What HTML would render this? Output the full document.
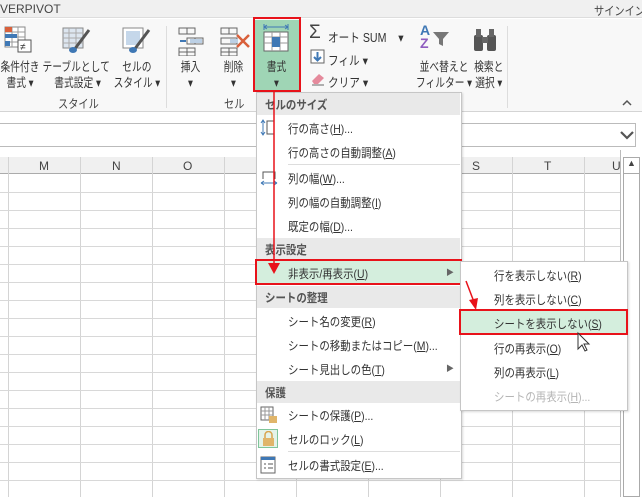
<!DOCTYPE html>
<html><head><meta charset="utf-8"><style>
*{margin:0;padding:0;box-sizing:border-box}
body{width:642px;height:497px;overflow:hidden;position:relative;background:#fff;font-family:"Liberation Sans","Noto Sans CJK JP",sans-serif;font-size:12px;color:#444}
.a{position:absolute}
.t{position:absolute;white-space:nowrap}
.hl{position:absolute;left:0;width:620px;height:1px;background:#d8d8d8}
.vl{position:absolute;top:157px;width:1px;height:340px;background:#d4d4d4}
.mi,.si,.mh span{transform:scaleX(.87);transform-origin:left center}
.mi{position:absolute;left:288px;white-space:nowrap;color:#333;font-size:12px}
.mh{position:absolute;left:257px;width:203px;height:22px;background:#e9e9e9;color:#555;padding:3px 0 0 8px;font-weight:bold;font-size:12px}
.mh span{display:inline-block}
.si{position:absolute;left:494px;white-space:nowrap;color:#333}
u{text-decoration:underline}
.cap{position:absolute;width:90px;font-size:12.5px;color:#333;text-align:center;line-height:16px;white-space:nowrap}
.cap span{display:inline-block;transform:scaleX(.78)}
.sm{display:inline-block;transform:scaleX(.85);transform-origin:left center}
</style></head><body>
<div class="a" style="left:0;top:0;width:642px;height:18px;background:#f0f0f0;border-bottom:1px solid #ddd"></div>
<div class="t" style="left:0;top:2px;font-size:12px;color:#444">VERPIVOT</div>
<div class="t" style="left:594px;top:2px;font-size:12px;color:#444"><span class="sm">サインイン</span></div>
<div class="a" style="left:0;top:19px;width:642px;height:93px;background:#f8f8f8;border-bottom:1px solid #d4d4d4"></div>
<div class="a" style="left:166px;top:26px;width:1px;height:82px;background:#ddd"></div>
<div class="a" style="left:507px;top:26px;width:1px;height:82px;background:#ddd"></div>
<svg class="a" style="left:4px;top:26px" width="30" height="30"><rect x="1" y="1" width="20" height="20" fill="#fff" stroke="#888"/><path d="M1 6h20M1 11h20M1 16h20M8 1v20M14 1v20" stroke="#999"/><rect x="1" y="1" width="7" height="5" fill="#d9603b"/><rect x="1" y="8" width="12" height="4" fill="#3f78b5"/><rect x="1" y="15" width="5" height="5" fill="#3f78b5"/><rect x="14" y="14" width="13" height="12" fill="#fff" stroke="#555"/><text x="16" y="24" font-size="10" fill="#333">≠</text></svg>
<div class="cap" style="left:-25px;top:59px"><span>条件付き<br>書式 ▾</span></div>
<svg class="a" style="left:62px;top:26px" width="30" height="30"><rect x="1" y="2" width="20" height="20" fill="#dde6f0" stroke="#888"/><path d="M1 7h20M1 12h20M1 17h20M7 2v20M14 2v20" stroke="#aaa"/><path d="M27 4L12 24" stroke="#555" stroke-width="3"/><ellipse cx="11" cy="24" rx="4" ry="3" fill="#3f78b5"/></svg>
<div class="cap" style="left:31px;top:59px"><span>テーブルとして<br>&nbsp;書式設定 ▾</span></div>
<svg class="a" style="left:122px;top:26px" width="30" height="30"><rect x="1" y="2" width="20" height="20" fill="#fff" stroke="#888"/><rect x="4" y="5" width="14" height="14" fill="#c5d7ea"/><path d="M27 4L12 24" stroke="#555" stroke-width="3"/><ellipse cx="11" cy="24" rx="4" ry="3" fill="#3f78b5"/></svg>
<div class="cap" style="left:92px;top:59px"><span>セルの<br>スタイル ▾</span></div>
<div class="t" style="left:58px;top:95px;color:#444"><span class="sm">スタイル</span></div>
<svg class="a" style="left:178px;top:26px" width="30" height="30"><path d="M1 2h16v6H1zM9 2v6M9 12h16v6H9zM17 12v6M1 22h16v8H1zM9 22v8M1 26h16" fill="none" stroke="#666"/><path d="M2 15h6" stroke="#3f78b5" stroke-width="2"/><rect x="12" y="13" width="12" height="4" fill="#bcd0e5"/></svg>
<div class="cap" style="left:146px;top:59px"><span>挿入<br>▾</span></div>
<svg class="a" style="left:220px;top:26px" width="32" height="30"><path d="M1 2h16v6H1zM9 2v6M1 12h16v6H1zM1 22h16v8H1zM9 22v8M1 26h16" fill="none" stroke="#666"/><rect x="10" y="13" width="8" height="4" fill="#bcd0e5"/><path d="M17 9l12 12M29 9L17 21" stroke="#d9603b" stroke-width="2.5"/></svg>
<div class="cap" style="left:189px;top:59px"><span>削除<br>▾</span></div>
<div class="t" style="left:224px;top:95px;color:#444"><span class="sm">セル</span></div>
<div class="a" style="left:255px;top:20px;width:44px;height:70px;background:#9fd5b5"></div>
<div class="a" style="left:253px;top:17px;width:48px;height:75px;border:2px solid #e8121a"></div>
<svg class="a" style="left:261px;top:23px" width="32" height="32"><path d="M3 4h24M3 4l3-2M3 4l3 2M27 4l-3-2M27 4l-3 2" stroke="#3f78b5" fill="none"/><path d="M3 1v6M27 1v6" stroke="#3f78b5"/><rect x="3" y="9" width="24" height="19" fill="#fff" stroke="#666"/><path d="M3 14h24M3 20h24M11 9v19M19 9v19" stroke="#999"/><rect x="11" y="14" width="8" height="10" fill="#3f78b5"/></svg>
<div class="cap" style="left:232px;top:59px"><span>書式<br>▾</span></div>
<div class="t" style="left:309px;top:22px;font-size:19px;color:#444">Σ</div>
<div class="t" style="left:328px;top:27px;font-size:12.5px;color:#333"><span class="sm">オート SUM &nbsp;&nbsp;&nbsp;▾</span></div>
<svg class="a" style="left:310px;top:49px" width="16" height="16"><rect x="1" y="1" width="13" height="13" fill="#fff" stroke="#666"/><path d="M7.5 3v8M4 8l3.5 3.5L11 8" stroke="#3f78b5" stroke-width="2" fill="none"/></svg>
<div class="t" style="left:328px;top:50px;font-size:12.5px;color:#333"><span class="sm">フィル ▾</span></div>
<svg class="a" style="left:310px;top:70px" width="16" height="16"><path d="M2 11l7-7 5 4-6 6H4z" fill="#e58a9c"/><path d="M2 15h12" stroke="#666"/></svg>
<div class="t" style="left:328px;top:72px;font-size:12.5px;color:#333"><span class="sm">クリア ▾</span></div>
<div class="t" style="left:420px;top:22px;font-size:14px;font-weight:bold;color:#3f78b5">A</div>
<div class="t" style="left:420px;top:35px;font-size:14px;font-weight:bold;color:#8e5cbf">Z</div>
<svg class="a" style="left:432px;top:30px" width="18" height="18"><path d="M1 2h16l-6 7v7l-4-2V9z" fill="#777"/></svg>
<div class="cap" style="left:399px;top:59px"><span>並べ替えと<br>フィルター ▾</span></div>
<svg class="a" style="left:472px;top:27px" width="26" height="26"><rect x="2" y="8" width="9" height="16" rx="2" fill="#555"/><rect x="15" y="8" width="9" height="16" rx="2" fill="#555"/><rect x="4" y="2" width="5" height="8" fill="#666"/><rect x="17" y="2" width="5" height="8" fill="#666"/><rect x="10" y="10" width="6" height="6" fill="#666"/></svg>
<div class="cap" style="left:444px;top:59px"><span>検索と<br>選択 ▾</span></div>
<svg class="a" style="left:622px;top:99px" width="10" height="8"><path d="M1 6l4-4 4 4" stroke="#555" stroke-width="1.5" fill="none"/></svg>
<div class="a" style="left:0;top:123px;width:636px;height:24px;border:1px solid #bbb;border-left:none;background:#fff"></div>
<svg class="a" style="left:620px;top:129px" width="14" height="12"><path d="M1 3l6 6 6-6" stroke="#555" stroke-width="2.2" fill="none"/></svg>
<div class="a" style="left:0;top:157px;width:620px;height:17px;background:#f0f0f0;border-bottom:1px solid #ababab"></div>
<div class="a" style="left:620px;top:150px;width:1px;height:347px;background:#bbb"></div>
<div class="a" style="left:623px;top:157px;width:17px;height:17px;border:1px solid #aaa;background:#fff"></div>
<div class="t" style="left:627px;top:158px;font-size:9px;color:#444">▲</div>
<div class="a" style="left:623px;top:174px;width:17px;height:323px;border:1px solid #aaa;border-top:none;background:#fff"></div>
<div class="vl" style="left:8px"></div><div class="vl" style="left:80px"></div><div class="vl" style="left:152px"></div><div class="vl" style="left:224px"></div><div class="vl" style="left:296px"></div><div class="vl" style="left:368px"></div><div class="vl" style="left:440px"></div><div class="vl" style="left:512px"></div><div class="vl" style="left:584px"></div>
<div class="t" style="left:39px;top:159px;color:#444">M</div>
<div class="t" style="left:112px;top:159px;color:#444">N</div>
<div class="t" style="left:183px;top:159px;color:#444">O</div>
<div class="t" style="left:472px;top:159px;color:#444">S</div>
<div class="t" style="left:544px;top:159px;color:#444">T</div>
<div class="t" style="left:612px;top:159px;color:#444">U</div>
<div class="hl" style="top:192px"></div><div class="hl" style="top:210px"></div><div class="hl" style="top:228px"></div><div class="hl" style="top:246px"></div><div class="hl" style="top:264px"></div><div class="hl" style="top:282px"></div><div class="hl" style="top:300px"></div><div class="hl" style="top:318px"></div><div class="hl" style="top:336px"></div><div class="hl" style="top:354px"></div><div class="hl" style="top:372px"></div><div class="hl" style="top:390px"></div><div class="hl" style="top:408px"></div><div class="hl" style="top:426px"></div><div class="hl" style="top:444px"></div><div class="hl" style="top:462px"></div><div class="hl" style="top:480px"></div>
<div class="a" style="left:256px;top:92px;width:206px;height:387px;background:#fff;border:1px solid #c6c6c6;box-shadow:1px 1px 2px rgba(0,0,0,.15)"></div>
<div class="mh" style="top:93px"><span>セルのサイズ</span></div>
<svg class="a" style="left:260px;top:119px" width="16" height="18"><path d="M3 1v15M1 4l2-3 2 3M1 13l2 3 2-3" stroke="#3f78b5" fill="none"/><rect x="7" y="2" width="7" height="13" fill="none" stroke="#555"/></svg>
<div class="mi" style="top:120px">行の高さ(<u>H</u>)...</div>
<div class="mi" style="top:144px">行の高さの自動調整(<u>A</u>)</div>
<div class="a" style="left:288px;top:164px;width:172px;height:1px;background:#ddd"></div>
<svg class="a" style="left:260px;top:170px" width="18" height="16"><path d="M3 9V2h12v7" fill="none" stroke="#555"/><path d="M1 13h16M1 13l3-2M1 13l3 2M17 13l-3-2M17 13l-3 2" stroke="#3f78b5" fill="none"/></svg>
<div class="mi" style="top:170px">列の幅(<u>W</u>)...</div>
<div class="mi" style="top:194px">列の幅の自動調整(<u>I</u>)</div>
<div class="mi" style="top:218px">既定の幅(<u>D</u>)...</div>
<div class="mh" style="top:238px"><span>表示設定</span></div>
<div class="a" style="left:257px;top:260px;width:203px;height:24px;background:#d4eedd"></div>
<div class="a" style="left:255px;top:259px;width:207px;height:26px;border:2px solid #e8121a"></div>
<div class="mi" style="top:265px">非表示/再表示(<u>U</u>)</div>
<div class="t" style="left:446px;top:267px;font-size:8px;color:#666">▶</div>
<div class="mh" style="top:286px"><span>シートの整理</span></div>
<div class="mi" style="top:313px">シート名の変更(<u>R</u>)</div>
<div class="mi" style="top:337px">シートの移動またはコピー(<u>M</u>)...</div>
<div class="mi" style="top:361px">シート見出しの色(<u>T</u>)</div>
<div class="t" style="left:446px;top:363px;font-size:8px;color:#666">▶</div>
<div class="mh" style="top:381px"><span>保護</span></div>
<svg class="a" style="left:260px;top:406px" width="18" height="18"><rect x="1" y="1" width="12" height="13" fill="#fff" stroke="#666"/><path d="M1 5h12M1 9h12M5 1v13M9 1v13" stroke="#999"/><rect x="9" y="10" width="8" height="7" fill="#e0b56a"/></svg>
<div class="mi" style="top:407px">シートの保護(<u>P</u>)...</div>
<div class="a" style="left:258px;top:429px;width:20px;height:19px;border:1px solid #7fc59a;background:#e4f3e9"></div>
<svg class="a" style="left:262px;top:431px" width="13" height="15"><path d="M3 7V4a3.5 3.5 0 017 0v3" stroke="#d9a54e" fill="none" stroke-width="1.5"/><rect x="1" y="7" width="11" height="8" fill="#e0b56a"/></svg>
<div class="mi" style="top:431px">セルのロック(<u>L</u>)</div>
<div class="a" style="left:288px;top:451px;width:172px;height:1px;background:#ddd"></div>
<svg class="a" style="left:260px;top:456px" width="16" height="18"><rect x="1" y="1" width="14" height="16" fill="#fff" stroke="#666"/><rect x="1" y="1" width="14" height="3" fill="#3f78b5"/><path d="M4 8h2M8 8h5M4 12h2M8 12h5" stroke="#555"/></svg>
<div class="mi" style="top:457px">セルの書式設定(<u>E</u>)...</div>
<div class="a" style="left:460px;top:261px;width:168px;height:150px;background:#fff;border:1px solid #c6c6c6;box-shadow:1px 1px 2px rgba(0,0,0,.15)"></div>
<div class="si" style="top:267px">行を表示しない(<u>R</u>)</div>
<div class="si" style="top:291px">列を表示しない(<u>C</u>)</div>
<div class="a" style="left:461px;top:310px;width:166px;height:24px;background:#d4eedd"></div>
<div class="a" style="left:459px;top:309px;width:169px;height:26px;border:2px solid #e8121a"></div>
<div class="si" style="top:315px">シートを表示しない(<u>S</u>)</div>
<div class="si" style="top:340px">行の再表示(<u>O</u>)</div>
<div class="si" style="top:364px">列の再表示(<u>L</u>)</div>
<div class="si" style="top:388px;color:#b5b5b5">シートの再表示(<u>H</u>)...</div>
<svg class="a" style="left:0;top:0" width="642" height="497">
<path d="M274 92V266" stroke="#e8121a" stroke-width="1.5"/><path d="M268 263l6 11 6-11z" fill="#e8121a"/>
<path d="M466 281L474 302" stroke="#e8121a" stroke-width="1.5"/><path d="M469 300l7 10 2-12z" fill="#e8121a"/>
<path d="M578 333v16l4-4 3 6 2-1-3-6h5z" fill="#fff" stroke="#333" stroke-width="1"/>
</svg>
</body></html>
